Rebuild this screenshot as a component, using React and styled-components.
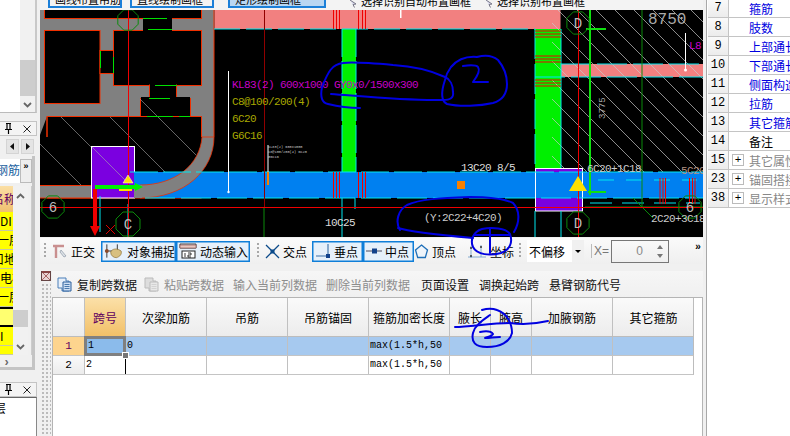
import React from "react";
import styled, { createGlobalStyle } from "styled-components";

const Global = createGlobalStyle`
  html, body { margin: 0; padding: 0; background: #f0f0f0; }
  #root { width: 790px; height: 436px; overflow: hidden; }
  * { box-sizing: border-box; }
`;

const CJK = `"Noto Sans CJK SC", "Liberation Sans", sans-serif`;
const MONO = `"Liberation Mono", monospace`;

const Page = styled.div`
  width: 790px; height: 436px; display: grid;
  grid-template-columns: 37px 3px 663px 87px;
  font-family: ${CJK}; font-size: 12px; color: #000; background: #f0f0f0; overflow: hidden;
  position: relative;
`;

/* left sidebar */
const Sidebar = styled.div`display: flex; flex-direction: column; height: 436px; background: #f0f0f0;`;
const TopList = styled.div`height: 113px; display: flex; background: #fff; border-bottom: 1px solid #bbb; border-right: 2px solid #c8c8c8;`;
const ListBody = styled.div`flex: 1;`;
const ScrollTrack = styled.div`
  width: ${p => p.$w || 15}px; background: #f1f1f1; display: flex; flex-direction: column; align-items: center;
  justify-content: ${p => p.$spread ? "space-between" : "flex-end"}; position: relative;
  padding: ${p => p.$spread ? "7px 0 5px" : "0 0 4px"};
`;
const ScrollThumb = styled.div`position: absolute; left: 0; right: 0; top: ${p => p.$top}px; height: ${p => p.$h}px; background: #cdcdcd;`;
const Gap = styled.div`height: ${p => p.$h}px; flex: none;`;
const PanelTitle = styled.div`
  height: 15px; flex: none; display: flex; justify-content: flex-end; align-items: center; gap: 10px; padding-right: 5px;
  border: 1px solid #c4c4c4; border-left: 0; background: #f4f4f4;
`;
const NavRow = styled.div`height: 20px; flex: none; display: flex; align-items: center; gap: 2px; padding: 0 0 0 6px;`;
const NavBtn = styled.div`
  width: 13px; height: 15px; background: #e4e4e4; border: 1px solid #d4d4d4; display: flex; align-items: center; justify-content: center;
`;
const SideFrame = styled.div`flex: none; height: 214px; margin-right: 2px; border-right: 3px solid #c4c4c4; border-bottom: 3px solid #c4c4c4; display: flex; flex-direction: column;`;
const SideTabs = styled.div`height: 24px; flex: none; margin-top: 3px; display: flex; background: #fff;`;
const ClipText = styled.div`flex: 1; overflow: hidden; font-size: 12px; line-height: 22px; color: #1a5fa0; white-space: nowrap; text-indent: -4px;`;
const MoreBtn = styled.div`
  width: 12px; background: #eee; border: 1px solid #bbb; font: bold 9px/14px ${MONO}; text-align: center;
`;
const YellowWrap = styled.div`height: 169px; flex: none; margin-top: 3px; display: flex; border-right: 1px solid #ccc;`;
const YellowCol = styled.div`width: 13px; display: flex; flex-direction: column; overflow: hidden;`;
const YellowHead = styled.div`height: 26px; flex: none; background: linear-gradient(#fbdfa5, #f0c070); color: #600060; line-height: 26px; text-indent: -8px; white-space: nowrap;`;
const YellowCell = styled.div`
  height: ${p => p.$h || 19}px; flex: none; overflow: hidden; white-space: nowrap; line-height: 18px;
  text-indent: ${p => p.$shift || 0}px; font-size: 12px;
  background: ${p => (p.$active ? "#ffff70" : "#ffff00")};
  border-top: ${p => (p.$active ? "2px solid #000" : "0")};
  border-bottom: ${p => (p.$active ? "2px solid #000" : "1px solid #c8c8a0")};
`;
const Pager = styled.div`flex: 1; padding-left: 3px; color: #666; font: bold 12px/16px ${MONO};`;
const BottomBody = styled.div`flex: 1; background: #fff; border-top: 1px solid #666; border-right: 1px solid #888; overflow: hidden; line-height: 18px; padding-top: 1px;`;
const Clipped = styled.div`margin-left: -6px; font-size: 12px;`;

/* centre column */
const Center = styled.div`display: flex; flex-direction: column; height: 436px;`;
const TopBar = styled.div`
  height: 10px; flex: none; display: flex; align-items: flex-end; overflow: hidden; background: #f3f3f3; padding: 0 0 2px 8px;
`;
const TopBtn = styled.div`
  width: ${p => p.$w}px; margin-right: ${p => p.$gap}px; height: 16px; flex: none; display: flex; align-items: flex-end; gap: 3px; padding: 0 3px 0 5px;
  border: ${p => (p.$plain ? "0" : "2px solid #1b7fd8")}; white-space: nowrap; overflow: hidden; line-height: 13px;
  font-size: 11px; background: ${p => (p.$on ? "#b8d6f2" : "transparent")};
`;
const CanvasBox = styled.div`height: 227px; flex: none; background: #000; overflow: hidden;`;
const CadText = styled.text`
  font-family: ${MONO}; font-size: ${p => p.$s || 11}px; letter-spacing: ${p => (p.$s ? 0 : -0.6)}px; fill: ${p => p.$c || "#ddd"};
`;

const SnapBar = styled.div`
  height: 26px; flex: none; margin-top: 1px; display: flex; align-items: center; background: linear-gradient(#fafafa, #efefef); padding-left: 4px; position: relative;
`;
const Grip = styled.div`width: 2px; height: 16px; flex: none; margin: ${p => p.$m || "0 6px 0 0"}; background: repeating-linear-gradient(#a8a8a8 0 2px, transparent 2px 4px);`;
const SnapItem = styled.div`
  height: ${p => (p.$on ? 21 : 20)}px; width: ${p => p.$w}px; flex: none; display: flex; align-items: center; gap: ${p => p.$g ?? 3}px; white-space: nowrap;
  padding-left: ${p => (p.$on ? 2 : 0)}px; font-size: 12px; margin-right: ${p => p.$mr || 0}px;
  ${p => p.$on && "border: 1px solid #0f7ed8; background: #e6f0fa; box-shadow: inset 0 0 0 0.5px #0f7ed8;"}
`;
const SelectBox = styled.div`
  width: 57px; height: 22px; flex: none; background: #fff; display: flex; align-items: center; padding-left: 2px; justify-content: space-between; font-size: 12px;
`;
const Caret = styled.div`
  width: 12px; height: 100%; background: #f0f0f0; position: relative;
  &::after { content: ""; position: absolute; left: 3px; top: 10px; border: 3.5px solid transparent; border-top: 3.5px solid #000; border-bottom: 0; }
`;
const XLabel = styled.div`margin-left: 7px; border-left: 1px solid #bbb; padding-left: 2px; width: 20px; color: #777; font: 12px "Liberation Sans", sans-serif;`;
const Spin = styled.div`
  width: 58px; height: 23px; flex: none; border: 1px solid #777; display: flex; justify-content: flex-end; align-items: center; gap: 14px; padding-right: 5px; color: #888;
  font: 12px "Liberation Sans", sans-serif;
`;
const SpinArrows = styled.div`display: flex; flex-direction: column; gap: 5px; `;
const Tri = styled.div`
  width: 0; height: 0; border: 3px solid transparent;
  ${p => (p.$up ? "border-bottom: 4px solid #777; border-top: 0;" : "border-top: 4px solid #777; border-bottom: 0;")}
`;
const Chevrons = styled.div`position: absolute; left: 655px; top: 4px; font: bold 10px/12px ${MONO};`;

const Lower = styled.div`flex: 1; display: flex; min-height: 0;`;
const DotRail = styled.div`width: 12px; flex: none; display: flex; flex-direction: column; padding: 7px 1px 0 1px;`;
const Dots = styled.div`
  flex: 1; margin-top: 2px;
  background-image: radial-gradient(#bbb 1px, transparent 1.2px); background-size: 4px 4px;
`;
const Detail = styled.div`flex: 1; display: flex; flex-direction: column; padding-top: 7px; min-width: 0;`;
const CmdBar = styled.div`
  height: 26px; flex: none; display: flex; align-items: center; background: linear-gradient(#f6f6f6, #f0f0f0); padding-left: 5px; font-size: 12px; white-space: nowrap;
`;
const Cmd = styled.div`
  display: flex; align-items: center; gap: 4px; width: ${p => p.$w}px; flex: none; color: ${p => (p.$off ? "#8d8d8d" : "#111")};
`;
const GridPanel = styled.div`flex: 1; background: #fff; border: 1px solid #b4b4b4; border-bottom: 0; min-height: 0; position: relative;`;
const GRID_COLS = "32px 41px 81px 81px 81px 81px 41px 41px 81px 81px";
const GridRow = styled.div`
  display: grid; grid-template-columns: ${GRID_COLS}; width: 641px; height: ${p => p.$h}px;
  border-bottom: 1px solid ${p => (p.$head ? "#bcbcbc" : "#c4c4c4")};
  background: ${p => (p.$head ? "linear-gradient(#fafafa,#ececec)" : p.$sel ? "#a6c9ef" : "#fff")};
  border-right: 1px solid #bcbcbc;
`;
const HeadCell = styled.div`
  display: flex; align-items: center; justify-content: center; border-right: 1px solid #c0c0c0; font-size: 12px; white-space: nowrap;
  ${p => p.$on && "background: linear-gradient(#fbe0a8,#f2c068); color: #600060;"}
  &:last-child { border-right: 0; }
`;
const RowNum = styled.div`
  display: flex; align-items: center; justify-content: center; font: 11px ${MONO}; border-right: 1px solid #c0c0c0;
  background: ${p => (p.$sel ? "#fdd48e" : "linear-gradient(#fafafa,#ececec)")}; color: ${p => (p.$sel ? "#600060" : "#000")};
`;
const Cell = styled.div`
  border-right: 1px solid #c0c0c0; font: 10px/18px ${MONO}; padding-left: 1px; white-space: nowrap; overflow: hidden;
  ${p => p.$curL && "border-left: 1px solid #000; margin-left: -1px;"}
  &:last-child { border-right: 0; }
`;
const ActiveCell = styled.div`
  position: relative; background: #8bbbeb; font: 10px/13px ${MONO}; padding-left: 1px; margin: -1px 0 -1px -1px;
  border: 3px solid #808080; z-index: 1;
  &::after { content: ""; position: absolute; right: -6px; bottom: -6px; width: 5px; height: 5px; background: #777; border: 1px solid #fff; }
`;

/* right panel */
const RightPanel = styled.div`display: flex; height: 436px; background: #fff;`;
const RightEdge = styled.div`width: 4px; flex: none; background: #f0f0f0; border-right: 1px solid #a8a8a8;`;
const PropList = styled.div`flex: 1; display: flex; flex-direction: column; padding-left: 1px; overflow: hidden;`;
const PropRow = styled.div`
  height: 19px; flex: none; display: flex; width: 120px; border-bottom: 1px solid #c4c4c4; margin-top: ${p => p.$first ? -1 : 0}px;
`;
const PropNum = styled.div`
  width: 21px; flex: none; display: flex; align-items: center; justify-content: center; background: linear-gradient(#fafafa,#ececec);
  border-right: 1px solid #c4c4c4; font: 12px ${MONO};
`;
const PropName = styled.div`
  flex: 1; display: flex; align-items: center; gap: 3px; padding-left: ${p => (p.$box ? 3 : 20)}px; font-size: 12px; white-space: nowrap;
  color: ${p => (p.$kind === "gray" ? "#888" : p.$kind === "black" ? "#000" : "#0000e0")};
`;
const PlusBox = styled.div`
  width: 12px; height: 12px; border: 1px solid #bbb; color: #000; display: flex; align-items: center; justify-content: center; font: 11px/10px ${MONO}; flex: none; margin-right: 2px;
`;

/* icons */
const Pin = () => (
  <svg width="9" height="11" viewBox="0 0 9 11"><path d="M2 0.5h5M3 1v5M6 1v5M1 6.5h7M4.5 7v4" stroke="#000" strokeWidth="1.2" fill="none" /></svg>
);
const Cross = () => (
  <svg width="8" height="8" viewBox="0 0 8 8"><path d="M0.5 0.5l7 7M7.5 0.5l-7 7" stroke="#222" strokeWidth="1" /></svg>
);
const Chev = ({ up }) => (
  <svg width="9" height="6" viewBox="0 0 9 6"><path d={up ? "M1 5l3.5-3.5L8 5" : "M1 1l3.5 3.5L8 1"} stroke="#666" strokeWidth="1.8" fill="none" /></svg>
);
const CloseIcon = () => (
  <svg width="10" height="10" viewBox="0 0 10 10"><rect x=".5" y=".5" width="9" height="9" fill="#e8d4d4" stroke="#644" /><path d="M1 1l8 8M9 1l-8 8" stroke="#a66" /><path d="M1 1h8" stroke="#844" strokeWidth="2" /></svg>
);
const OrthoIcon = () => (
  <svg width="16" height="16" viewBox="0 0 16 16"><path d="M1 3h11M4 3v12" stroke="#c98f8f" strokeWidth="2.4" fill="none" /><path d="M9 7l5 6-2 1-4-5z" fill="#dfe3e8" stroke="#7a8a9a" strokeWidth=".6" /></svg>
);
const SnapIcon = () => (
  <svg width="21" height="18" viewBox="0 0 21 18"><path d="M3 2v14M14 2v6M1 9h16" stroke="#333" strokeWidth="1" fill="none" /><circle cx="3" cy="9" r="2" fill="#8a4a2a" /><path d="M7 10c2-4 7-4 11-1 1 3-1 6-5 7-3 0-6-2-6-6z" fill="#d8c080" stroke="#806020" strokeWidth=".6" /></svg>
);
const DynIcon = () => (
  <svg width="18" height="16" viewBox="0 0 18 16"><path d="M1 1h16M1 5h16M1 1v4M17 1v4" stroke="#444" fill="#bcd" /><rect x="1" y="2" width="16" height="3" fill="#e8c8c0" stroke="#844" strokeWidth=".6" /><rect x="3" y="8" width="13" height="7" fill="#fff" stroke="#222" /><path d="M6 10v4M9 10h3v2h-3v2h3" stroke="#222" strokeWidth=".9" fill="none" /></svg>
);
const CrossIcon = () => (
  <svg width="15" height="15" viewBox="0 0 15 15"><path d="M1 1l13 13M14 1l-13 13" stroke="#0b4a8a" strokeWidth="1.3" /><rect x="5.5" y="5.5" width="4" height="4" fill="#0b4a8a" /></svg>
);
const PerpIcon = () => (
  <svg width="16" height="16" viewBox="0 0 16 16"><path d="M1 13h14M13 1v12" stroke="#3a6ea5" strokeWidth="1.1" /><rect x="11" y="11" width="4" height="4" fill="#12418a" /></svg>
);
const MidIcon = () => (
  <svg width="16" height="6" viewBox="0 0 16 6"><path d="M0 3h16" stroke="#667" strokeWidth="1.2" /><rect x="6" y="0.5" width="5" height="5" fill="#12418a" /></svg>
);
const VertexIcon = () => (
  <svg width="15" height="15" viewBox="0 0 15 15"><path d="M7.5 1l6 5-2.2 7.5H3.7L1.5 6z" stroke="#1f6fb8" strokeWidth="1.3" fill="#eef4fa" /></svg>
);
const CoordIcon = () => (
  <svg width="20" height="15" viewBox="0 0 20 15"><path d="M1 13h18M4 2v12M14 1v12" stroke="#6a9ac8" strokeWidth=".8" /><circle cx="4" cy="4" r="1" fill="#333" /><circle cx="4" cy="12" r="1" fill="#333" /><circle cx="14" cy="3" r="1" fill="#333" /></svg>
);
const CopyIcon = ({ off }) => (
  <svg width="16" height="15" viewBox="0 0 16 15">
    <path d="M1 1h8v3h3v10H5v-3H1z" fill={off ? "#ddd" : "#e8f0fa"} stroke={off ? "#bbb" : "#4a7fb8"} />
    <path d="M6 5h8v9H6z" fill={off ? "#e8e8e8" : "#cfe0f4"} stroke={off ? "#bbb" : "#2a5f9c"} />
    <path d="M7.5 7.5h5M7.5 9.5h5M7.5 11.5h5" stroke={off ? "#ccc" : "#2a5f9c"} strokeWidth=".8" />
  </svg>
);
const SmallArrow = () => (
  <svg width="9" height="9" viewBox="0 0 9 9"><path d="M1 1l6 4-3 0.5 1.5 3" stroke="#778" strokeWidth="1" fill="#dde" /></svg>
);

/* CAD drawing in page coordinates */
const range = (a, b, s) => { const o = []; for (let v = a; v <= b; v += s) o.push(v); return o; };
const Octa = ({ cx, cy, r, label }) => {
  const pts = range(0, 7, 1).map(i => {
    const t = (Math.PI / 8) * (2 * i + 1);
    return `${(cx + r * Math.cos(t)).toFixed(1)},${(cy + r * Math.sin(t)).toFixed(1)}`;
  }).join(" ");
  return (
    <g>
      <polygon points={pts} fill="none" stroke="#0a8a0a" strokeWidth="1" />
      <CadText x={cx} y={cy + 5} $s={14} $c="#bbb" textAnchor="middle">{label}</CadText>
    </g>
  );
};

const CadCanvas = () => (
  <svg width="663" height="227" viewBox="40 10 663 227" style={{ display: "block" }}>
    <defs>
      <clipPath id="hatchR"><rect x="552" y="10" width="151" height="174" /></clipPath>
      <clipPath id="hatchB"><rect x="40" y="98" width="160" height="87" /></clipPath>
    </defs>
    <rect x="40" y="10" width="663" height="227" fill="#000" />
    {/* gray walls */}
    <rect x="40" y="10" width="174" height="127" fill="#808080" />
    <g fill="#000" stroke="#f03000" strokeWidth="1">
      <rect x="44.5" y="9" width="157" height="9.5" />
      <rect x="44.5" y="30.5" width="55.5" height="73" />
      <rect x="113.5" y="30.5" width="88" height="55" />
      <rect x="100" y="50.5" width="13.5" height="23" />
      <rect x="143" y="18" width="29" height="12" stroke="none" />
      <rect x="149.5" y="85" width="27" height="14" />
      <rect x="140.5" y="98.5" width="50" height="18" />
      <path d="M47 116.5v21h-8M47 116.5H201.5V198H47z" />
    </g>
    <rect x="150" y="84" width="26" height="4" fill="#000" />
    <rect x="141" y="97" width="49" height="4" fill="#000" />
    <rect x="143" y="28" width="29" height="4" fill="#000" />
    <rect x="40" y="137" width="214" height="61" fill="#000" />
    <rect x="202" y="116" width="12" height="22" fill="#808080" />
    <path d="M214 10V137" stroke="#f03000" />
    {/* pink bands, columns, beam */}
    <rect x="214.5" y="10" width="346" height="19" fill="#f28080" />
    <rect x="535" y="64" width="168" height="13" fill="#f28080" />
    <rect x="342" y="29" width="14" height="143" fill="#00f000" />
    <rect x="535" y="29" width="26" height="143" fill="#00f000" />
    {/* hatching */}
    <g stroke="#c8c8c8" strokeWidth="0.7" clipPath="url(#hatchR)">
      {range(330, 720, 19).map(x => <line key={x} x1={x} y1="10" x2={x + 240} y2="250" />)}
    </g>
    <g stroke="#aaa" strokeWidth="0.6" clipPath="url(#hatchB)">
      <line x1="61" y1="117" x2="127" y2="183" />
      <line x1="110" y1="117" x2="178" y2="185" />
      <line x1="140" y1="99" x2="196" y2="155" />
      <line x1="40" y1="144" x2="81" y2="185" />
    </g>
    {/* purple boxes and blue band */}
    <rect x="91.5" y="146.5" width="43" height="51.5" fill="#7b00e0" stroke="#fff" />
    <rect x="535.5" y="168.5" width="47" height="42.5" fill="#7b00e0" stroke="#fff" />
    <rect x="134" y="172" width="569" height="26" fill="#0080f0" />
    <path d="M535.5 168.5V211M582.5 168.5V211" stroke="#fff" />
    <line x1="92" y1="147" x2="128" y2="183" stroke="#aaa" strokeWidth=".6" />
    <rect x="40" y="185" width="51" height="13" fill="#808080" />
    <path d="M40 185.5h51M40 198h51" stroke="#f03000" />
    <path d="M202 137C200 165 175 185 140 185L140 198C185 198 214 170 214 137Z" fill="#808080" stroke="#f03000" strokeWidth=".8" />
    <rect x="134" y="185" width="8" height="13" fill="#808080" />
    {/* cyan edges */}
    <g stroke="#00e8f0" strokeWidth="1" fill="none">
      <path d="M214 29H535" strokeDasharray="26 6" />
      <path d="M130 172H703" strokeDasharray="28 5" />
      <path d="M145 198H703" strokeDasharray="30 6" />
      <path d="M535 77H703" strokeDasharray="30 6" />
      <path d="M561 64H703" strokeDasharray="30 6" />
      <path d="M342 29V172" strokeDasharray="28 4" />
      <path d="M356 29V172" strokeDasharray="28 4" />
      <path d="M535 29V168" strokeDasharray="30 5" />
      <path d="M561 29V168" />
      <path d="M342 198V237M355 198V209M535 211V237M561 211V237M128 204V237M100 196V232" />
      <path d="M590 203H700" strokeDasharray="22 10" />
      <path d="M598 180H697" strokeDasharray="16 12" />
    </g>
    {/* green ticks */}
    <g stroke="#00e000" strokeWidth="1" fill="none">
      <path d="M143 18.5h24M148 29.5h24M100.5 51v17M113.5 57v16M155 85.5h22M149 98.5h21M147 116.5h26M179 116.5h11" />
    </g>
    <path d="M590 10V195M586 29h20M588 192h18" stroke="#10e010" strokeWidth="2" />
    <path d="M642 10V207M585 207H703M633 198l20 20" stroke="#0a8a0a" strokeWidth="1" fill="none" />
    <path d="M264 207V237" stroke="#0a8a0a" />
    {/* red stripes and axis */}
    <g stroke="#f00000" strokeWidth="1">
      {[333.5, 336.5, 339.5, 358.5, 362.5, 365.5].map(x => <path key={x} d={`M${x} 10V29M${x} 172V198`} />)}
      {[31, 34, 37, 56, 59, 62, 80, 83, 86].map(y => <path key={y} d={`M535 ${y}H561`} />)}
      {[660, 663, 665.5, 689.5, 692.5, 695].map(x => <path key={x} d={`M${x} 178V204`} />)}
      <path d="M40 207.5H703" />
      <path d="M128.5 10V237M578.5 10V237" />
    </g>
    <path d="M264.5 10V207" stroke="#900000" />
    {/* orange marks */}
    <rect x="457" y="181" width="8" height="8" fill="#f88000" />
    <rect x="267" y="172" width="2" height="13" fill="#f88000" />
    {/* axis bubbles */}
    <Octa cx={128} cy={20} r={11} label="" />
    <Octa cx={53} cy={207} r={12} label="6" />
    <Octa cx={128} cy={224} r={13} label="C" />
    <Octa cx={578} cy={23} r={12} label="D" />
    <Octa cx={578} cy={223} r={12} label="D" />
    <Octa cx={690} cy={207} r={12} label="6" />
    {/* white leaders */}
    <path d="M228.5 71V192M268 145V172M685.5 33V70" stroke="#fff" strokeWidth="1" />
    <circle cx="228.5" cy="192" r="1.2" fill="#fff" /><circle cx="685.5" cy="70" r="1.5" fill="#fff" />
    <rect x="400" y="10" width="1.5" height="8" fill="#fff" />
    {/* text */}
    <CadText x="232" y="88" $c="#c800c8">KL83(2)  600x1000  GY0x0/1500x300</CadText>
    <CadText x="232" y="105" $c="#a8a800">C8@100/200(4)</CadText>
    <CadText x="232" y="122" $c="#a8a800">6C20</CadText>
    <CadText x="232" y="139" $c="#a8a800">G6C16</CadText>
    <CadText x="461" y="171" $c="#ddd">13C20 8/5</CadText>
    <CadText x="325" y="226" $c="#ddd">10C25</CadText>
    <CadText x="424" y="221" $c="#ccc">(Y:2C22+4C20)</CadText>
    <CadText x="587" y="172" $c="#ccc">6C20+1C18</CadText>
    <CadText x="681" y="174" $c="#b09080">5C20</CadText>
    <CadText x="651" y="222" $c="#ccc">2C20+3C18</CadText>
    <CadText x="648" y="24" $s={16} $c="#aaa">8750</CadText>
    <CadText x="689" y="49" $c="#c800c8">L8</CadText>
    <CadText x="0" y="0" $s={9} $c="#aaa" transform="translate(605 119) rotate(-90)">3775</CadText>
    <CadText x="268" y="148" $s={3.6} $c="#ccc">KL83(2) 600x1000</CadText>
    <CadText x="268" y="153" $s={3.6} $c="#ccc">C8@100/200(4) 6C20</CadText>
    <CadText x="268" y="158" $s={3.6} $c="#ccc">G6C16</CadText>
    {/* triangles and arrows */}
    <path d="M578 176l9 15h-18z" fill="#ffe000" />
    <path d="M128 175l5 8h-10z" fill="#ffe000" stroke="#fff" strokeWidth=".5" />
    <rect x="119" y="188" width="13" height="3" fill="#ffe000" />
    <path d="M95 185h40v-2l8 4-8 4v-2H95z" fill="#00f000" />
    <path d="M93 189h4v37h3l-5 10-5-10h3z" fill="#f00000" />
    <path d="M106 225l9 9M115 225l-9 9" stroke="#e00000" strokeWidth="1" />
  </svg>
);

/* hand-drawn ink laid over the page */
const InkLayer = styled.svg`position: absolute; left: 0; top: 0; pointer-events: none; z-index: 5;`;
const Ink = () => (
  <InkLayer width="790" height="436" viewBox="0 0 790 436" fill="none" stroke="#0000e0" strokeWidth="2" strokeLinecap="round" strokeLinejoin="round">
    <path d="M331 94C370 97 410 101 443 100C450 100 454 98 453 92C453 85 450 79 445 77C430 70 410 66 393 65C370 63 350 62 343 63C332 64 328 72 322 87C320 97 322 103 328 104C340 107 350 108 360 108" />
    <path d="M445 80C441 92 441 101 447 104C460 107 480 106 493 103C503 100 507 93 507 84C507 75 503 66 498 60C492 55 484 55 477 57C465 56 457 60 451 67C448 71 446 75 445 80" />
    <path d="M463 66C470 65 476 65 478 67C481 71 476 78 473 82C478 82 483 82 488 82" />
    <path d="M400 230C395 222 398 210 407 205C420 199 440 198 470 197C490 197 505 199 513 203C520 210 520 222 514 232" />
    <path d="M398 228C410 232 440 235 473 238" />
    <path d="M473 247C470 240 473 232 482 229C492 227 506 228 510 234C513 242 510 250 501 253C490 256 477 255 473 247" />
    <path d="M490 228V253M474 235H510" />
    <path d="M455 327C470 327 490 323 510 323C525 325 535 324 548 321" />
    <path d="M490 315C483 320 475 325 473 333C471 342 475 347 487 347C500 347 510 342 512 333C512 324 508 314 497 310C492 308 485 309 482 310" />
    <path d="M480 332C485 331 491 331 493 334C492 336 488 337 485 338C490 338 495 337 500 337" />
  </InkLayer>
);

const PROPS = [
  ["7", "箍筋"], ["8", "肢数"], ["9", "上部通长筋"], ["10", "下部通长筋"], ["11", "侧面构造筋"], ["12", "拉筋"], ["13", "其它箍筋"],
  ["14", "备注", "black"], ["15", "其它属性", "gray", 1], ["23", "锚固搭接", "gray", 1], ["38", "显示样式", "gray", 1],
];
const HEADS = ["次梁加筋", "吊筋", "吊筋锚固", "箍筋加密长度", "腋长", "腋高", "加腋钢筋", "其它箍筋"];

export default function App() {
  return (
    <Page>
      <Global />
      <Sidebar>
        <TopList>
          <ListBody />
          <ScrollTrack>
            <ScrollThumb $top={60} $h={36} />
            <Chev />
          </ScrollTrack>
        </TopList>
        <Gap $h={8} />
        <PanelTitle><Pin /><Cross /></PanelTitle>
        <NavRow>
          <NavBtn><svg width="5" height="7"><path d="M4 0v7L0 3.5z" fill="#111" /></svg></NavBtn>
          <NavBtn><svg width="5" height="7"><path d="M1 0v7l4-3.5z" fill="#111" /></svg></NavBtn>
        </NavRow>
        <SideFrame>
          <SideTabs>
            <ClipText>钢筋</ClipText>
            <MoreBtn>»</MoreBtn>
          </SideTabs>
          <YellowWrap>
            <YellowCol>
              <YellowHead>名称</YellowHead>
              <YellowCell>DI</YellowCell>
              <YellowCell $shift={-3}>一层</YellowCell>
              <YellowCell $shift={-8}>口地</YellowCell>
              <YellowCell>电梯</YellowCell>
              <YellowCell $shift={-3}>一层</YellowCell>
              <YellowCell $active $h={20} />
              <YellowCell>I</YellowCell>
              <YellowCell $h={9} />
            </YellowCol>
            <ScrollTrack $w={15} $spread>
              <ScrollThumb $top={124} $h={17} />
              <Chev up />
              <Chev />
            </ScrollTrack>
          </YellowWrap>
          <Pager>›</Pager>
        </SideFrame>
        <Gap $h={12} />
        <PanelTitle><Pin /><Cross /></PanelTitle>
        <BottomBody><Clipped>层</Clipped></BottomBody>
      </Sidebar>
      <div />
      <Center>
        <TopBar>
          <TopBtn $w={74} $gap={8}>画线布置吊筋</TopBtn>
          <TopBtn $w={84} $gap={14}>直线绘制画框</TopBtn>
          <TopBtn $w={98} $gap={18} $on>矩形绘制画框</TopBtn>
          <TopBtn $w={130} $gap={6} $plain><SmallArrow />选择识别自动布置画框</TopBtn>
          <TopBtn $w={120} $gap={0} $plain><SmallArrow />选择识别布置画框</TopBtn>
        </TopBar>
        <CanvasBox><CadCanvas /></CanvasBox>
        <SnapBar>
          <Grip />
          <SnapItem $w={49}><OrthoIcon />正交</SnapItem>
          <SnapItem $w={75} $on><SnapIcon />对象捕捉</SnapItem>
          <SnapItem $w={74} $on><DynIcon />动态输入</SnapItem>
          <Grip $m="0 6px 0 7px" />
          <SnapItem $w={47}><CrossIcon />交点</SnapItem>
          <SnapItem $w={51} $on><PerpIcon />垂点</SnapItem>
          <SnapItem $w={51} $on><MidIcon />中点</SnapItem>
          <SnapItem $w={53}><VertexIcon />顶点</SnapItem>
          <SnapItem $w={52}><CoordIcon />坐标</SnapItem>
          <Grip />
          <SelectBox>不偏移<Caret /></SelectBox>
          <XLabel>X=</XLabel>
          <Spin>0<SpinArrows><Tri $up /><Tri /></SpinArrows></Spin>
          <Chevrons>»</Chevrons>
        </SnapBar>
        <Lower>
          <DotRail><CloseIcon /><Dots /></DotRail>
          <Detail>
            <CmdBar>
              <Cmd $w={87}><CopyIcon />复制跨数据</Cmd>
              <Cmd $w={89} $off><CopyIcon off />粘贴跨数据</Cmd>
              <Cmd $w={93} $off>输入当前列数据</Cmd>
              <Cmd $w={95} $off>删除当前列数据</Cmd>
              <Cmd $w={58}>页面设置</Cmd>
              <Cmd $w={70}>调换起始跨</Cmd>
              <Cmd $w={80}>悬臂钢筋代号</Cmd>
            </CmdBar>
            <GridPanel>
              <GridRow $head $h={39}>
                <HeadCell />
                <HeadCell $on>跨号</HeadCell>
                {HEADS.map(h => <HeadCell key={h}>{h}</HeadCell>)}
              </GridRow>
              <GridRow $sel $h={19}>
                <RowNum $sel>1</RowNum>
                <ActiveCell>1</ActiveCell>
                <Cell>0</Cell><Cell /><Cell />
                <Cell>max(1.5*h,50</Cell>
                <Cell /><Cell /><Cell /><Cell />
              </GridRow>
              <GridRow $h={19}>
                <RowNum>2</RowNum>
                <Cell>2</Cell>
                <Cell $curL /><Cell /><Cell />
                <Cell>max(1.5*h,50</Cell>
                <Cell /><Cell /><Cell /><Cell />
              </GridRow>
            </GridPanel>
          </Detail>
        </Lower>
      </Center>
      <RightPanel>
        <RightEdge />
        <PropList>
          {PROPS.map(([n, t, kind, box], i) => (
            <PropRow key={n} $first={i === 0}>
              <PropNum>{n}</PropNum>
              <PropName $kind={kind} $box={box}>
                {box ? <PlusBox>+</PlusBox> : null}{t}
              </PropName>
            </PropRow>
          ))}
        </PropList>
      </RightPanel>
      <Ink />
    </Page>
  );
}
